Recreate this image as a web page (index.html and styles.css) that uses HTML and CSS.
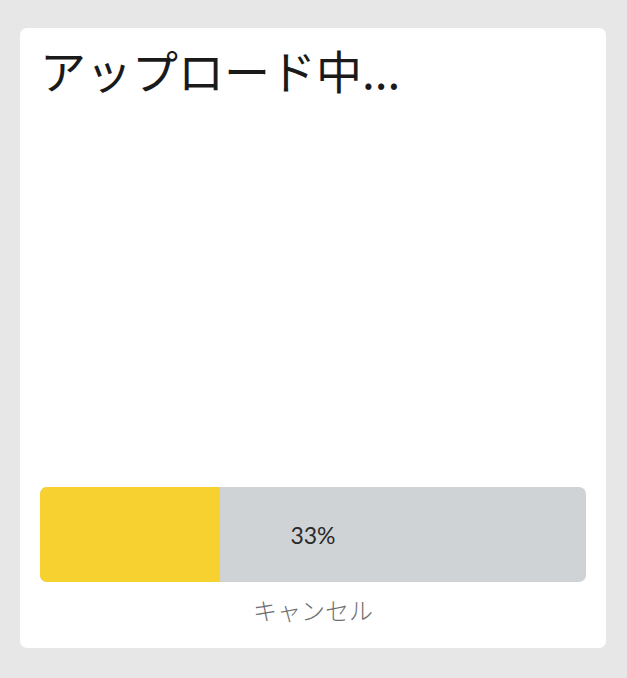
FILE: index.html
```html
<!DOCTYPE html>
<html lang="ja">
<head>
<meta charset="utf-8">
<link rel="stylesheet" href="styles.css">
</head>
<body>
<div class="card">
  <h1 class="title">アップロード中...</h1>
  <div class="footer">
    <div class="progress">
      <div class="progress-fill" style="width:33%"></div>
      <span class="progress-label">33%</span>
    </div>
    <button class="cancel">キャンセル</button>
  </div>
</div>
</body>
</html>
```
FILE: styles.css
```css
html, body {
  margin: 0;
  padding: 0;
}
body {
  background: #e7e7e7;
  padding: 28px 21px 30px 20px;
  font-family: "Noto Sans CJK JP", "Noto Sans", sans-serif;
}
.card {
  background: #fff;
  border-radius: 7px;
  height: 620px;
  box-sizing: border-box;
  padding: 13px 20px 20px 20px;
  display: flex;
  flex-direction: column;
}
.title {
  margin: 0;
  font-size: 46px;
  font-weight: 400;
  line-height: 56px;
  color: #1a1a1a;
}
.footer {
  margin-top: auto;
  display: flex;
  flex-direction: column;
  align-items: stretch;
}
.progress {
  position: relative;
  height: 95px;
  background: #d0d3d6;
  border-radius: 7px;
  overflow: hidden;
  display: flex;
  align-items: center;
  justify-content: center;
}
.progress-fill {
  position: absolute;
  left: 0;
  top: 0;
  bottom: 0;
  background: #f7d12f;
}
.progress-label {
  position: relative;
  font-family: "Lato", "Noto Sans", sans-serif;
  font-size: 23px;
  color: #2a2a2a;
}
.cancel {
  align-self: center;
  margin-top: 10px;
  background: none;
  border: none;
  padding: 0;
  font-family: "Noto Sans CJK JP", sans-serif;
  font-size: 24px;
  font-weight: 300;
  line-height: 36px;
  color: #707070;
  cursor: pointer;
}
```
